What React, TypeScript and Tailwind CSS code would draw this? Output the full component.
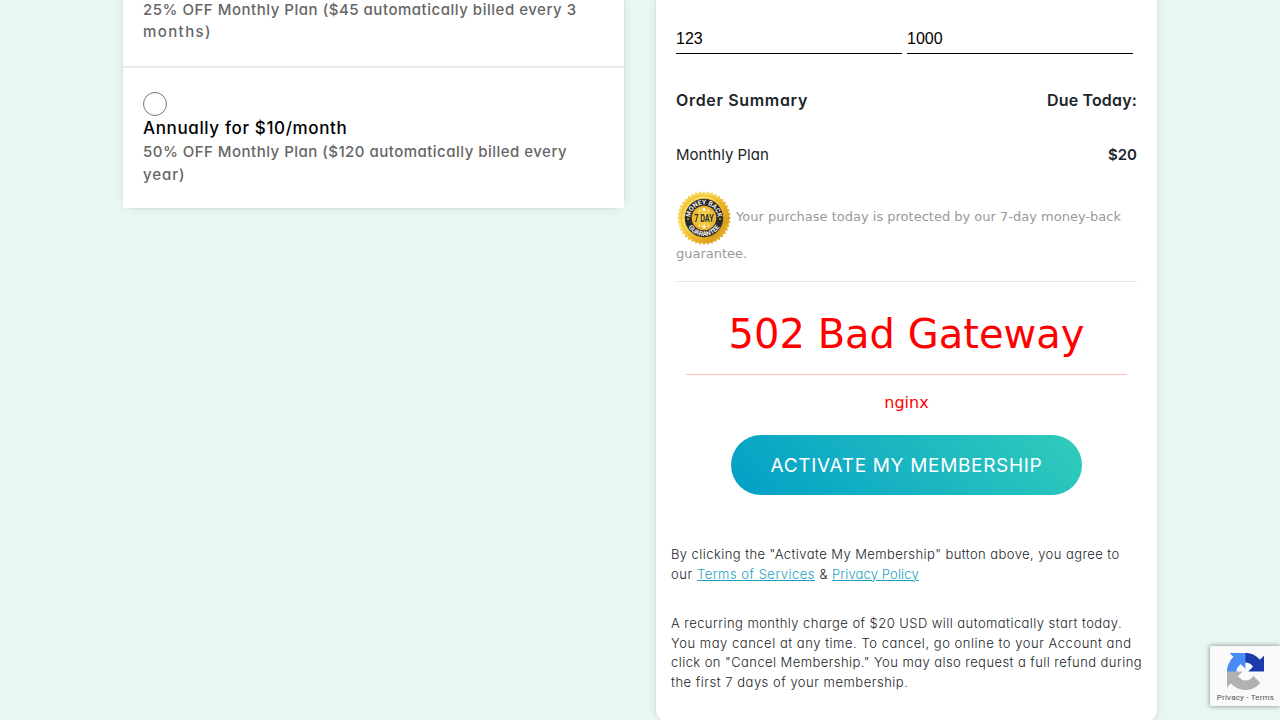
function PlanOption({ title, lines, spacing }: { title?: string; lines: string[]; spacing: string[] }) {
  return (
    <div>
      {title && (
        <>
          <span className="block size-6 rounded-full border border-[#767676] bg-white" />
          <p className="h-[25px] text-[17px] leading-[25px] font-medium tracking-[0.63px] text-black">{title}</p>
        </>
      )}
      <div className="text-[15px] leading-[22.5px] font-medium text-[#666]">
        {lines.map((line, i) => (
          <p key={line} className={spacing[i]}>
            {line}
          </p>
        ))}
      </div>
    </div>
  );
}

function GuaranteeSeal() {
  const teeth = Array.from({ length: 40 }, (_, i) => {
    const a = (i * Math.PI) / 20;
    const b = a + Math.PI / 40;
    return `${(30 + 29 * Math.cos(a)).toFixed(2)},${(30 + 29 * Math.sin(a)).toFixed(2)} ${(30 + 26.6 * Math.cos(b)).toFixed(2)},${(30 + 26.6 * Math.sin(b)).toFixed(2)}`;
  }).join(" ");
  return (
    <svg viewBox="0 0 60 60" className="size-[56px] shrink-0" role="img">
      <defs>
        <linearGradient id="gold" x1="0" y1="0.1" x2="1" y2="0.9">
          <stop offset="0" stopColor="#f5c02c" />
          <stop offset="0.3" stopColor="#fbdd63" />
          <stop offset="0.55" stopColor="#f0bd2e" />
          <stop offset="0.78" stopColor="#d99f1d" />
          <stop offset="1" stopColor="#fad04a" />
        </linearGradient>
        <radialGradient id="core">
          <stop offset="0" stopColor="#ffdf5c" />
          <stop offset="1" stopColor="#eab125" />
        </radialGradient>
        <path id="arcTop" d="M15.4 30a14.6 14.6 0 0 1 29.2 0" />
        <path id="arcBottom" d="M10.7 30a19.3 19.3 0 0 0 38.6 0" />
      </defs>
      <polygon points={teeth} fill="url(#gold)" />
      <circle cx="30" cy="30" r="24.2" fill="none" stroke="#dba422" strokeWidth="0.6" />
      <circle cx="30" cy="30" r="20.6" fill="#2a2b2d" />
      <circle cx="30" cy="30" r="13.2" fill="url(#core)" />
      <g fill="#f1efe8" fontFamily="Roboto, sans-serif" fontWeight="700" fontSize="7" textAnchor="middle">
        <text>
          <textPath href="#arcTop" startOffset="50%">MONEY BACK</textPath>
        </text>
        <text>
          <textPath href="#arcBottom" startOffset="50%">GUARANTEE</textPath>
        </text>
      </g>
      <circle cx="12.9" cy="31" r="0.9" fill="#f4c63b" />
      <circle cx="47.1" cy="31" r="0.9" fill="#f4c63b" />
      <g fill="#fff8d8">
        <path d="M30 18.4l.8 1.5 1.6.2-1.2 1.2.3 1.7-1.5-.8-1.5.8.3-1.7-1.2-1.2 1.6-.2z" />
        <circle cx="25.3" cy="21.9" r="1" />
        <circle cx="34.7" cy="21.9" r="1" />
        <path d="M30 36.8l.8 1.5 1.6.2-1.2 1.2.3 1.7-1.5-.8-1.5.8.3-1.7-1.2-1.2 1.6-.2z" />
        <circle cx="25.3" cy="38.2" r="1" />
        <circle cx="34.7" cy="38.2" r="1" />
      </g>
      <text x="30" y="34.3" fill="#2a2b2d" fontFamily="Roboto, sans-serif" fontWeight="700" fontSize="12" textAnchor="middle" textLength="21" lengthAdjust="spacingAndGlyphs">
        7 DAY
      </text>
    </svg>
  );
}

function RecaptchaLogo() {
  return (
    <svg viewBox="0 0 64 64" className="size-[37px]">
      <path fill="#1c3aa9" d="M64 31.955l-.033-1.37V4.687l-7.16 7.16C50.948 4.674 42.033.093 32.05.093c-10.4 0-19.622 4.96-25.458 12.64l11.736 11.86a15.55 15.55 0 0 1 4.754-5.334c2.05-1.6 4.952-2.906 8.968-2.906.485 0 .86.057 1.135.163 4.976.393 9.288 3.14 11.828 7.124l-8.307 8.307L64 31.953" />
      <path fill="#4a8cf6" d="M31.862.094l-1.37.033H4.594l7.16 7.16C4.58 13.147 0 22.06 0 32.046c0 10.4 4.96 19.622 12.64 25.458L24.5 45.768a15.55 15.55 0 0 1-5.334-4.754c-1.6-2.05-2.906-4.952-2.906-8.968 0-.485.057-.86.163-1.135.393-4.976 3.14-9.288 7.124-11.828l8.307 8.307L31.86.095" />
      <path fill="#b1b1b1" d="M.001 32.045l.033 1.37v25.898l7.16-7.16c5.86 7.173 14.774 11.754 24.76 11.754 10.4 0 19.622-4.96 25.458-12.64l-11.736-11.86a15.55 15.55 0 0 1-4.754 5.334c-2.05 1.6-4.952 2.906-8.968 2.906-.485 0-.86-.057-1.135-.163-4.976-.393-9.288-3.14-11.828-7.124l8.307-8.307c-10.522.04-22.4.066-27.295-.005" />
    </svg>
  );
}

export default function App() {
  return (
    <div className="relative h-[720px] w-[1280px] overflow-hidden bg-[#e8f7f0] font-['Inter',sans-serif] whitespace-nowrap text-[#212529] [font-feature-settings:'cv11']">
      <main className="flex items-start gap-8 pl-[123px]">
        <section className="w-[501px] rounded-b-[10px] shadow-[0_0_10px_rgba(0,0,0,0.09),0_0_2px_rgba(0,0,0,0.12)]">
          <div className="flex h-[68px] items-end border-b-2 border-[#ebebeb] bg-white px-5 pb-[22.5px]">
            <PlanOption
              lines={["25% OFF Monthly Plan ($45 automatically billed every 3", "months)"]}
              spacing={["tracking-[0.52px]", "tracking-[1.4px]"]}
            />
          </div>
          <div className="h-[140px] bg-white px-5 pt-6">
            <PlanOption
              title="Annually for $10/month"
              lines={["50% OFF Monthly Plan ($120 automatically billed every", "year)"]}
              spacing={["tracking-[0.48px]", "tracking-[0.95px]"]}
            />
          </div>
        </section>

        <section className="h-[721px] w-[501px] rounded-b-[10px] bg-white shadow-[0_0_10px_rgba(0,0,0,0.09),0_0_2px_rgba(0,0,0,0.12)]">
          <div className="px-5">
            <div className="flex gap-[5px] pt-6 font-['Liberation_Sans',sans-serif] text-base leading-[29px] text-black">
              <div className="h-[30px] w-[226px] border-b border-black">123</div>
              <div className="h-[30px] w-[226px] border-b border-black">1000</div>
            </div>

            <div className="mt-[34px] flex h-6 items-center justify-between text-base font-semibold">
              <span className="tracking-[0.68px]">Order Summary</span>
              <span className="tracking-[0.16px]">Due Today:</span>
            </div>
            <div className="mt-[31px] flex h-6 items-center justify-between text-[15px]">
              <span>Monthly Plan</span>
              <span className="font-semibold">$20</span>
            </div>

            <div className="mt-[23px] h-[92px] border-b border-[#e6e6e6] font-['DejaVu_Sans',sans-serif] text-[13px] leading-5 text-[#999]">
              <div className="flex h-14 items-center">
                <GuaranteeSeal />
                <span className="-mt-[3px] ml-1">Your purchase today is protected by our 7-day money-back</span>
              </div>
              <p className="-mt-[2px]">guarantee.</p>
            </div>

            <div className="px-[10px] text-center font-['DejaVu_Sans',sans-serif] text-[#f00]">
              <h1 className="mt-[28px] h-12 text-[40px] leading-12">502 Bad Gateway</h1>
              <hr className="mt-4 border-t border-[#ffbfbf]" />
              <p className="mt-4 h-6 text-base leading-6">nginx</p>
            </div>

            <button className="mx-auto mt-5 flex h-[60px] w-[351px] items-center justify-center rounded-full bg-[linear-gradient(45deg,#029fc7,#31ccbb)] pt-[2px] text-[19px] tracking-[0.68px] text-white">
              ACTIVATE MY MEMBERSHIP
            </button>
          </div>

          <div className="mt-[50px] px-[15px] text-[13px] leading-[19.5px] font-[350]">
            <p className="tracking-[0.43px]">By clicking the "Activate My Membership" button above, you agree to</p>
            <p className="flex">
              <span className="w-[26px] tracking-[0.6px]">our</span>
              <a className="w-[118px] tracking-[0.5px] text-[#1a9fc0] underline">Terms of Services</a>
              <span className="w-[17px] text-center">&amp;</span>
              <a className="w-[87px] tracking-[0.14px] text-[#1a9fc0] underline">Privacy Policy</a>
            </p>
            <div className="mt-[30px]">
              <p className="tracking-[0.44px]">A recurring monthly charge of $20 USD will automatically start today.</p>
              <p className="tracking-[0.53px]">You may cancel at any time. To cancel, go online to your Account and</p>
              <p className="tracking-[0.43px]">click on "Cancel Membership." You may also request a full refund during</p>
              <p className="tracking-[0.51px]">the first 7 days of your membership.</p>
            </div>
          </div>
        </section>
      </main>

      <aside className="absolute right-0 bottom-[14px] flex h-[60px] w-[70px] flex-col items-center rounded-l-[2px] bg-[#f9f9f9] pt-[7px] shadow-[0_0_5px_gray]">
        <RecaptchaLogo />
        <span className="mt-[3px] ml-[1px] font-['Roboto',sans-serif] text-[8px] leading-[10px] tracking-[0.2px] text-[#555] [font-feature-settings:normal]">
          Privacy - Terms
        </span>
      </aside>
    </div>
  );
}
